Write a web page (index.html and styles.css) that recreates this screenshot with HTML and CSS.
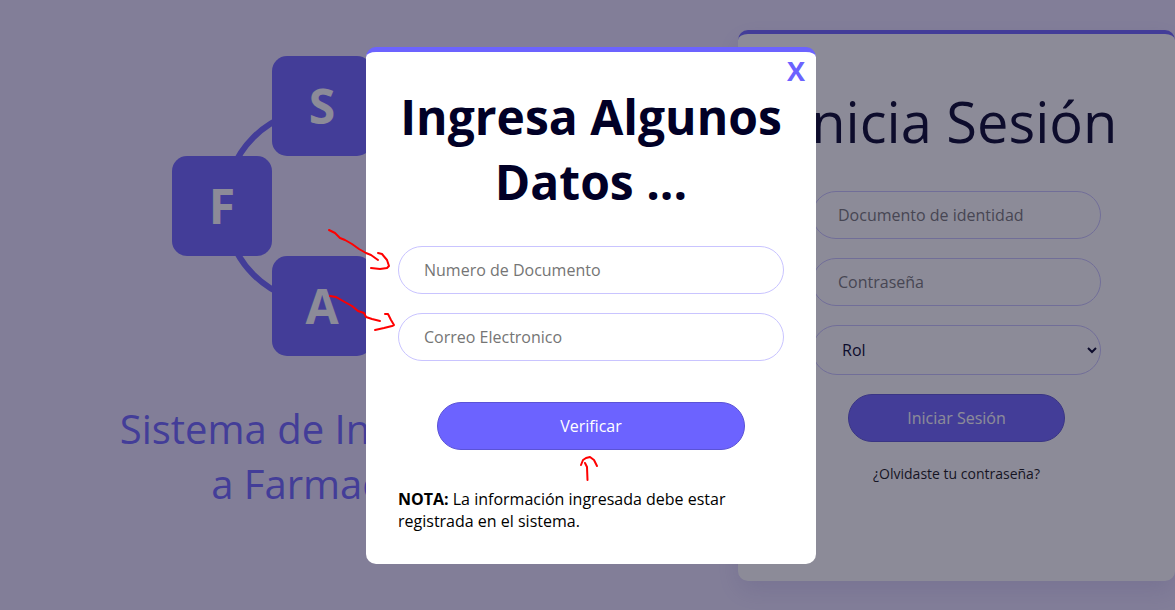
FILE: index.html
```html
<!DOCTYPE html>
<html lang="es">
<head>
<meta charset="utf-8">
<meta name="viewport" content="width=device-width, initial-scale=1">
<title>Sistema de Inventario a Farmacias</title>
<link rel="stylesheet" href="styles.css">
</head>
<body>
<main class="page">
  <section class="brand">
    <div class="logo">
      <div class="ring"></div>
      <span class="tile tile-top">S</span>
      <span class="tile tile-left">F</span>
      <span class="tile tile-bottom">A</span>
    </div>
    <p class="tagline">Sistema de Inventario<br>a Farmacias</p>
  </section>
  <section class="login">
    <h2 class="login-title">Inicia Sesión</h2>
    <form class="form">
      <input class="field" type="text" placeholder="Documento de identidad" aria-label="Documento de identidad">
      <input class="field" type="password" placeholder="Contraseña" aria-label="Contraseña">
      <select class="field select" aria-label="Rol"><option>Rol</option></select>
      <button class="button login-button" type="button">Iniciar Sesión</button>
      <a class="forgot" href="#">¿Olvidaste tu contraseña?</a>
    </form>
  </section>
</main>
<div class="overlay">
  <section class="modal" role="dialog" aria-labelledby="modal-title">
    <button class="close" type="button" aria-label="Cerrar">X</button>
    <h1 class="modal-title" id="modal-title">Ingresa Algunos Datos ...</h1>
    <form class="form">
      <input class="field" type="text" placeholder="Numero de Documento" aria-label="Numero de Documento">
      <input class="field" type="email" placeholder="Correo Electronico" aria-label="Correo Electronico">
      <button class="button verify" type="button">Verificar</button>
    </form>
    <p class="note"><strong>NOTA:</strong> La información ingresada debe estar registrada en el sistema.</p>
  </section>
</div>
<svg class="marks" width="1175" height="610" viewBox="0 0 1175 610" aria-hidden="true">
  <path d="M329 230L335 233L340 238L345 240L352 244L359 249L366 253L371 255L378 260M378 253L382 254L387 260L389 266L387 268L380 269L371 268"/>
  <path d="M330 296L336 297L343 301L352 306L358 311L364 313L366 317L372 319L380 321M385 314L388 314L391 320L394 325L392 326L384 328L375 330"/>
  <path d="M585 463L587 467L587.5 480M581 465L583 460L586 458L590 457L594 460L597 466"/>
</svg>
</body>
</html>
```
FILE: styles.css
```css
* { box-sizing: border-box; }
body {
  margin: 0;
  font-family: "Open Sans", "Noto Sans", sans-serif;
  font-size: 16px;
  line-height: 22px;
  color: #000;
  background: #ebe5ff;
}
.page {
  display: grid;
  grid-template-columns: 738fr 437fr;
  min-height: 100vh;
  overflow: hidden;
}
.brand {
  display: flex;
  flex-direction: column;
  align-items: center;
  padding: 56px 94px 0 0;
}
.logo {
  display: grid;
  grid-template-columns: repeat(3, 100px);
  grid-template-rows: repeat(3, 100px);
}
.ring {
  grid-area: 1 / 1 / 4 / 4;
  place-self: center;
  width: 200px;
  height: 200px;
  border: 6px solid #6c63ff;
  border-radius: 50%;
}
.tile {
  display: grid;
  place-items: center;
  border-radius: 15px;
  background: #6c63ff;
  color: #fff;
  font-size: 48px;
  font-weight: 700;
}
.tile-top { grid-area: 1 / 2; }
.tile-left { grid-area: 2 / 1; }
.tile-bottom { grid-area: 3 / 2; }
.tagline {
  margin: 45px 0 0;
  color: #6c63ff;
  font-size: 40px;
  line-height: 55px;
  text-align: center;
  white-space: nowrap;
}
.login {
  margin: 30px 0 29px;
  padding: 49px 74px 32px;
  border-top: 4px solid #6c63ff;
  border-radius: 10px;
  background: #fff;
  box-shadow: 0 10px 25px rgba(92, 80, 180, 0.15);
}
.login-title {
  margin: 0 -20px 32px;
  color: #010026;
  font-size: 56px;
  font-weight: 400;
  line-height: 76px;
  text-align: center;
  white-space: nowrap;
}
.form {
  display: flex;
  flex-direction: column;
  align-items: center;
  gap: 19px;
}
.field {
  width: 100%;
  height: 48px;
  padding: 0 25px;
  border: 1px solid #c9c4ff;
  border-radius: 25px;
  background: #fff;
  font: inherit;
}
.field::placeholder { color: #757575; }
.select {
  height: 50px;
  padding-right: 0;
  color: #010026;
}
.button {
  height: 48px;
  padding: 0;
  border: 1px solid #5b53d6;
  border-radius: 25px;
  background: #6c63ff;
  color: #fff;
  font: inherit;
  font-weight: 500;
}
.login-button { width: 75%; }
.forgot {
  margin-top: 2px;
  color: #111;
  font-size: 14px;
  text-decoration: none;
}
.overlay {
  position: fixed;
  inset: 0;
  display: grid;
  place-items: center;
  padding-left: 7px;
  background: rgba(25, 23, 49, 0.5);
}
.modal {
  position: relative;
  width: 450px;
  max-width: 100%;
  padding: 32px;
  border-top: 5px solid #6c63ff;
  border-radius: 10px;
  background: #fff;
}
.close {
  position: absolute;
  top: 3px;
  right: 11px;
  padding: 0;
  border: 0;
  background: none;
  color: #6c63ff;
  font: inherit;
  font-size: 27px;
  font-weight: 700;
  line-height: 32px;
}
.modal-title {
  margin: 0 0 32px;
  color: #010026;
  font-size: 48px;
  line-height: 65px;
  text-align: center;
}
.verify {
  width: 80%;
  margin-top: 22px;
}
.note { margin: 38px 0 0; }
.marks {
  position: fixed;
  top: 0;
  left: 0;
  fill: none;
  stroke: #f00;
  stroke-width: 2;
  stroke-linecap: round;
  stroke-linejoin: round;
  pointer-events: none;
}
```
